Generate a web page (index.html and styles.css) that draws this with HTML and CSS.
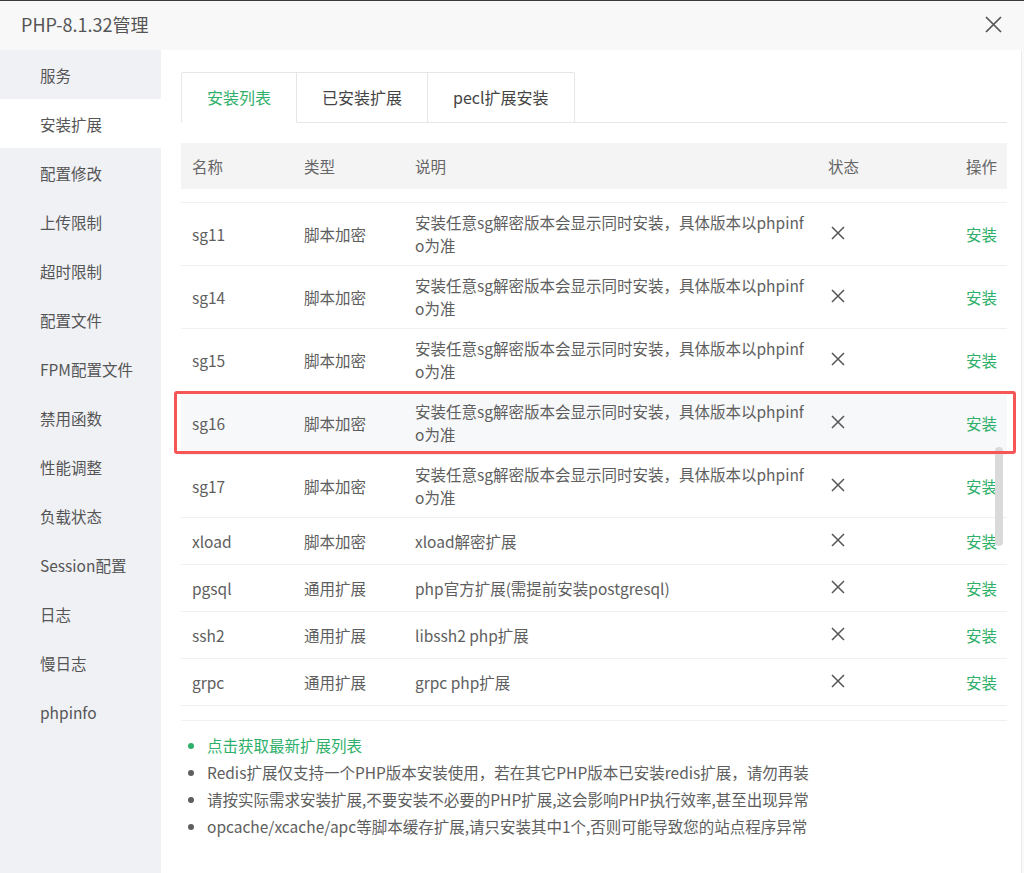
FILE: index.html
```html
<!DOCTYPE html>
<html lang="zh-CN">
<head>
<meta charset="utf-8">
<title>PHP-8.1.32管理</title>
<link rel="stylesheet" href="styles.css">
</head>
<body>
<div class="modal">
  <header class="header">
    <span class="title">PHP-8.1.32管理</span>
    <svg class="close" width="17" height="17" viewBox="0 0 17 17"><path d="M1 1L16 16M16 1L1 16" stroke="#555" stroke-width="1.7" fill="none"/></svg>
  </header>
  <div class="layout">
    <nav class="sidebar">
      <div class="nav-item">服务</div>
      <div class="nav-item active">安装扩展</div>
      <div class="nav-item">配置修改</div>
      <div class="nav-item">上传限制</div>
      <div class="nav-item">超时限制</div>
      <div class="nav-item">配置文件</div>
      <div class="nav-item">FPM配置文件</div>
      <div class="nav-item">禁用函数</div>
      <div class="nav-item">性能调整</div>
      <div class="nav-item">负载状态</div>
      <div class="nav-item">Session配置</div>
      <div class="nav-item">日志</div>
      <div class="nav-item">慢日志</div>
      <div class="nav-item">phpinfo</div>
    </nav>
    <main class="main">
      <div class="tabs">
        <div class="tab active">安装列表</div>
        <div class="tab">已安装扩展</div>
        <div class="tab">pecl扩展安装</div>
      </div>
      <div class="table">
        <div class="row head">
          <div class="cell">名称</div>
          <div class="cell">类型</div>
          <div class="cell">说明</div>
          <div class="cell">状态</div>
          <div class="cell op">操作</div>
        </div>
        <div class="tbody">
          <div class="row partial"></div>
          <div class="row">
            <div class="cell">sg11</div>
            <div class="cell">脚本加密</div>
            <div class="cell desc"><span class="line">安装任意sg解密版本会显示同时安装，具体版本以phpinf</span><span class="line">o为准</span></div>
            <div class="cell"><svg class="x" width="14" height="14" viewBox="0 0 14 14"><path d="M1 1L13 13M13 1L1 13"/></svg></div>
            <div class="cell op"><span class="link">安装</span></div>
          </div>
          <div class="row">
            <div class="cell">sg14</div>
            <div class="cell">脚本加密</div>
            <div class="cell desc"><span class="line">安装任意sg解密版本会显示同时安装，具体版本以phpinf</span><span class="line">o为准</span></div>
            <div class="cell"><svg class="x" width="14" height="14" viewBox="0 0 14 14"><path d="M1 1L13 13M13 1L1 13"/></svg></div>
            <div class="cell op"><span class="link">安装</span></div>
          </div>
          <div class="row">
            <div class="cell">sg15</div>
            <div class="cell">脚本加密</div>
            <div class="cell desc"><span class="line">安装任意sg解密版本会显示同时安装，具体版本以phpinf</span><span class="line">o为准</span></div>
            <div class="cell"><svg class="x" width="14" height="14" viewBox="0 0 14 14"><path d="M1 1L13 13M13 1L1 13"/></svg></div>
            <div class="cell op"><span class="link">安装</span></div>
          </div>
          <div class="row hover">
            <div class="cell">sg16</div>
            <div class="cell">脚本加密</div>
            <div class="cell desc"><span class="line">安装任意sg解密版本会显示同时安装，具体版本以phpinf</span><span class="line">o为准</span></div>
            <div class="cell"><svg class="x" width="14" height="14" viewBox="0 0 14 14"><path d="M1 1L13 13M13 1L1 13"/></svg></div>
            <div class="cell op"><span class="link">安装</span></div>
          </div>
          <div class="row">
            <div class="cell">sg17</div>
            <div class="cell">脚本加密</div>
            <div class="cell desc"><span class="line">安装任意sg解密版本会显示同时安装，具体版本以phpinf</span><span class="line">o为准</span></div>
            <div class="cell"><svg class="x" width="14" height="14" viewBox="0 0 14 14"><path d="M1 1L13 13M13 1L1 13"/></svg></div>
            <div class="cell op"><span class="link">安装</span></div>
          </div>
          <div class="row">
            <div class="cell">xload</div>
            <div class="cell">脚本加密</div>
            <div class="cell desc"><span class="line">xload解密扩展</span></div>
            <div class="cell"><svg class="x" width="14" height="14" viewBox="0 0 14 14"><path d="M1 1L13 13M13 1L1 13"/></svg></div>
            <div class="cell op"><span class="link">安装</span></div>
          </div>
          <div class="row">
            <div class="cell">pgsql</div>
            <div class="cell">通用扩展</div>
            <div class="cell desc"><span class="line">php官方扩展(需提前安装postgresql)</span></div>
            <div class="cell"><svg class="x" width="14" height="14" viewBox="0 0 14 14"><path d="M1 1L13 13M13 1L1 13"/></svg></div>
            <div class="cell op"><span class="link">安装</span></div>
          </div>
          <div class="row">
            <div class="cell">ssh2</div>
            <div class="cell">通用扩展</div>
            <div class="cell desc"><span class="line">libssh2 php扩展</span></div>
            <div class="cell"><svg class="x" width="14" height="14" viewBox="0 0 14 14"><path d="M1 1L13 13M13 1L1 13"/></svg></div>
            <div class="cell op"><span class="link">安装</span></div>
          </div>
          <div class="row">
            <div class="cell">grpc</div>
            <div class="cell">通用扩展</div>
            <div class="cell desc"><span class="line">grpc php扩展</span></div>
            <div class="cell"><svg class="x" width="14" height="14" viewBox="0 0 14 14"><path d="M1 1L13 13M13 1L1 13"/></svg></div>
            <div class="cell op"><span class="link">安装</span></div>
          </div>
        </div>
      </div>
      <ul class="tips">
        <li class="green">点击获取最新扩展列表</li>
        <li>Redis扩展仅支持一个PHP版本安装使用，若在其它PHP版本已安装redis扩展，请勿再装</li>
        <li>请按实际需求安装扩展,不要安装不必要的PHP扩展,这会影响PHP执行效率,甚至出现异常</li>
        <li>opcache/xcache/apc等脚本缓存扩展,请只安装其中1个,否则可能导致您的站点程序异常</li>
      </ul>
    </main>
    <div class="edge"></div>
  </div>
  <div class="scrollbar"></div>
  <div class="mark"></div>
</div>
</body>
</html>
```
FILE: styles.css
```css
* { box-sizing: border-box; }
html, body { margin: 0; padding: 0; }
body {
  width: 1024px;
  height: 873px;
  overflow: hidden;
  background: #fff;
  font-family: "Noto Sans CJK SC", "Noto Sans", sans-serif;
  font-size: 15.5px;
  color: #5e5e5e;
}
.modal {
  position: relative;
  width: 1024px;
  height: 873px;
  border-top: 1px solid #3a3a3a;
}
.header {
  height: 49px;
  background: #f8f8f8;
  display: flex;
  align-items: center;
  justify-content: space-between;
  padding: 0 22px 0 21px;
}
.title {
  font-size: 18px;
  line-height: 24px;
  color: #555;
  margin-top: -3px;
}
.close { display: block; margin-top: -2px; }
.layout {
  display: flex;
  height: 823px;
}
.sidebar {
  width: 161px;
  flex: none;
  background: #f0f1f5;
}
.nav-item {
  height: 49px;
  line-height: 50px;
  padding-left: 40px;
  font-size: 15.5px;
  color: #555;
  white-space: nowrap;
}
.nav-item.active { background: #fff; }
.main {
  flex: 1;
  padding: 22px 14px 0 20px;
}
.edge {
  width: 3px;
  flex: none;
  border-left: 1px solid #ececec;
  background: #fafafa;
}
.tabs {
  display: flex;
  border-bottom: 1px solid #e6e6e6;
  height: 51px;
}
.tab {
  height: 51px;
  padding: 0 25px;
  line-height: 49px;
  border-top: 1px solid #e6e6e6;
  border-right: 1px solid #e6e6e6;
  border-bottom: 1px solid #e6e6e6;
  color: #444;
  font-size: 16px;
  white-space: nowrap;
}
.tab:first-child {
  border-left: 1px solid #e6e6e6;
  border-top-left-radius: 2px;
}
.tab:last-child { border-top-right-radius: 2px; }
.tab.active {
  color: #2fb06a;
  border-bottom-color: #fff;
}
.table { margin-top: 20px; }
.row {
  display: grid;
  grid-template-columns: 112px 111px 413px 1fr 100px;
  align-items: center;
  border-bottom: 1px solid #f0f0f0;
}
.cell {
  padding: 8px 10px 8px 11px;
  line-height: 23px;
  min-height: 46px;
  display: flex;
  align-items: center;
  white-space: nowrap;
}
.cell.desc {
  flex-direction: column;
  align-items: flex-start;
  justify-content: center;
}
.line { display: block; }
.cell.op { justify-content: flex-end; }
.row.head {
  background: #f4f4f4;
  border-bottom: none;
  height: 46px;
}
.row.head .cell { color: #666; }
.tbody {
  height: 532px;
  overflow: hidden;
  border-bottom: 1px solid #f0f0f0;
}
.row.partial { height: 14px; }
.row.hover { background: #f7f8fa; }
.x { display: block; margin-left: 3px; margin-top: -3px; }
.x path { stroke: #555; stroke-width: 1.5; fill: none; }
.link { color: #2fb06a; }
.tips {
  margin: 11px 0 0;
  padding-left: 26px;
  line-height: 27px;
  font-size: 15.5px;
  color: #5e5e5e;
}
.tips .green { color: #2fb06a; }
.scrollbar {
  position: absolute;
  left: 995px;
  top: 446px;
  width: 8px;
  height: 99px;
  border-radius: 4px;
  background: #dadada;
}
.mark {
  position: absolute;
  left: 174px;
  top: 390px;
  width: 842px;
  height: 63px;
  border: 3px solid #f65656;
  border-radius: 3px;
}
```
